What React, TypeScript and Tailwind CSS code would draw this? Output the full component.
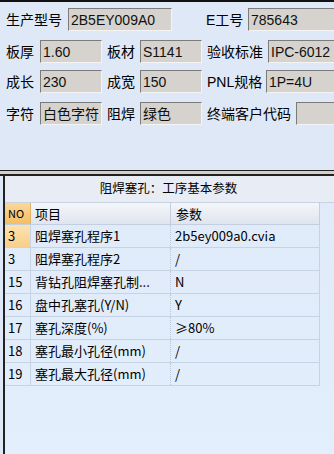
const rows = [
  { no: "3", item: "阻焊塞孔程序1", val: "2b5ey009a0.cvia", sel: true },
  { no: "3", item: "阻焊塞孔程序2", val: "/" },
  { no: "15", item: "背钻孔阻焊塞孔制...", val: "N" },
  { no: "16", item: "盘中孔塞孔(Y/N)", val: "Y" },
  { no: "17", item: "塞孔深度(%)", val: "≥80%" },
  { no: "18", item: "塞孔最小孔径(mm)", val: "/" },
  { no: "19", item: "塞孔最大孔径(mm)", val: "/" },
];

function Field({ value, className }: { value: string; className: string }) {
  return (
    <div
      className={`h-[23px] shrink-0 bg-[#d6d3ce] border border-t-[#7b7b7b] border-l-[#7b7b7b] border-r-[#f4f4f4] border-b-[#f4f4f4] pl-[2px] flex items-center text-[14px] text-[#111] whitespace-nowrap overflow-hidden ${className}`}
    >
      {value}
    </div>
  );
}

export default function App() {
  return (
    <div
      className="w-[334px] h-[454px] overflow-hidden bg-[#dfe8f7] text-black"
      style={{ fontFamily: '"Liberation Sans", "Noto Sans CJK SC", sans-serif' }}
    >
      <div className="h-[2px] bg-[#111]" />

      <div className="text-[14px] leading-none">
        {/* row 1 */}
        <div className="flex items-center mt-[6px]">
          <span className="w-[68px] pl-[6px] shrink-0">生产型号</span>
          <Field value="2B5EY009A0" className="w-[104px]" />
          <span className="w-[76px] pl-[34px] shrink-0">E工号</span>
          <Field value="785643" className="w-[100px]" />
        </div>
        {/* row 2 */}
        <div className="flex items-center mt-[9px]">
          <span className="w-[40px] pl-[6px] shrink-0">板厚</span>
          <Field value="1.60" className="w-[62px]" />
          <span className="w-[38px] pl-[5px] shrink-0">板材</span>
          <Field value="S1141" className="w-[62px]" />
          <span className="w-[66px] pl-[5px] shrink-0">验收标准</span>
          <Field value="IPC-6012" className="w-[100px]" />
        </div>
        {/* row 3 */}
        <div className="flex items-center mt-[7px]">
          <span className="w-[40px] pl-[6px] shrink-0">成长</span>
          <Field value="230" className="w-[62px]" />
          <span className="w-[38px] pl-[5px] shrink-0">成宽</span>
          <Field value="150" className="w-[62px]" />
          <span className="w-[64px] pl-[5px] shrink-0">PNL规格</span>
          <Field value="1P=4U" className="w-[100px]" />
        </div>
        {/* row 4 */}
        <div className="flex items-center mt-[9px]">
          <span className="w-[40px] pl-[6px] shrink-0">字符</span>
          <Field value="白色字符" className="w-[62px]" />
          <span className="w-[38px] pl-[5px] shrink-0">阻焊</span>
          <Field value="绿色" className="w-[62px]" />
          <span className="w-[94px] pl-[5px] shrink-0">终端客户代码</span>
          <Field value="" className="w-[100px]" />
        </div>
      </div>

      {/* splitter */}
      <div className="mt-[45px] h-[1px] bg-[#222]" />
      <div className="h-[3px] bg-[#d4d0c8]" />
      <div className="h-[2px] bg-[#222]" />

      {/* panel */}
      <div className="ml-[3px] border-l-2 border-[#222] h-[300px] bg-gradient-to-b from-[#e0eaf8] to-[#e3effd]">
        <div className="h-[27px] bg-[#e8edf5] border-b border-[#c9d3e0] flex items-center justify-center text-[12.5px] pr-[2px]">
          阻焊塞孔：工序基本参数
        </div>
        <div className="w-[315px] text-[13px]" style={{ fontFamily: '"Noto Sans CJK SC", sans-serif' }}>
          <div className="flex h-[22px] border-b border-[#c3cfdf]">
            <div className="w-[26px] bg-gradient-to-b from-[#fbd89a] to-[#f4bd63] flex items-center pl-[3px] text-[11px] border-r border-[#e0b36a]">
              NO
            </div>
            <div className="w-[140px] bg-gradient-to-b from-[#f3f6fa] to-[#dfe5ee] flex items-center pl-[4px] border-r border-[#c3cfdf]">
              项目
            </div>
            <div className="flex-1 bg-gradient-to-b from-[#f3f6fa] to-[#dfe5ee] flex items-center pl-[5px] border-r border-[#c3cfdf]">
              参数
            </div>
          </div>
          {rows.map((r, i) => (
            <div key={i} className="flex h-[23px] border-b border-[#c6d3e5]">
              <div
                className={`w-[26px] flex items-center pl-[3px] border-r border-[#c6d3e5] ${
                  r.sel ? "bg-gradient-to-b from-[#fde2b0] to-[#f9cf8a]" : ""
                }`}
              >
                {r.no}
              </div>
              <div className="w-[140px] flex items-center pl-[4px] border-r border-dotted border-[#b9c7da] whitespace-nowrap">
                {r.item}
              </div>
              <div className="flex-1 flex items-center pl-[4px] border-r border-[#c6d3e5] whitespace-nowrap">
                {r.val}
              </div>
            </div>
          ))}
        </div>
      </div>
    </div>
  );
}
